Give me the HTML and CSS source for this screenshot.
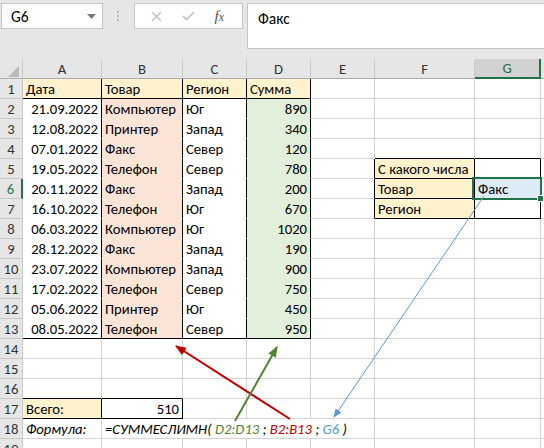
FILE: index.html
```html
<!DOCTYPE html>
<html>
<head>
  <title>СУММЕСЛИМН</title>
  <link rel="stylesheet" href="styles.css">
</head>
<body>
  <div class="app">
    <div class="toolbar">
      <div class="namebox">
        <span>G6</span>
        <svg width="9" height="5" viewBox="0 0 9 5"><path d="M0 0 H9 L4.5 5 Z" fill="#7a7a7a"/></svg>
      </div>
      <div class="grip">
        <svg width="3" height="11" viewBox="0 0 3 11">
          <rect x="0" y="0" width="2" height="2" fill="#b4b4b4"/>
          <rect x="0" y="4" width="2" height="2" fill="#b4b4b4"/>
          <rect x="0" y="8" width="2" height="2" fill="#b4b4b4"/>
        </svg>
      </div>
      <div class="fxbtns">
        <svg width="11" height="11" viewBox="0 0 11 11"><path d="M1 1 L10 10 M10 1 L1 10" stroke="#c3c3c3" stroke-width="1.4"/></svg>
        <svg width="13" height="10" viewBox="0 0 13 10"><path d="M1 5 L4.5 8.5 L12 1" fill="none" stroke="#c3c3c3" stroke-width="1.6"/></svg>
        <span class="fx">f<i>x</i></span>
      </div>
      <div class="formula">Факс</div>
    </div>

    <table class="sheet">
      <colgroup>
        <col style="width:23px"><col style="width:79px"><col style="width:81px"><col style="width:64px">
        <col style="width:64px"><col style="width:64px"><col style="width:100px"><col style="width:66px"><col style="width:30px">
      </colgroup>
      <tr class="head">
        <th class="corner"><svg width="11" height="11" viewBox="0 0 11 11"><path d="M11 0 V11 H0 Z" fill="#b9b9b9"/></svg></th>
        <th>A</th><th>B</th><th>C</th><th>D</th><th>E</th><th>F</th><th class="cur">G</th><th></th>
      </tr>
      <tr>
        <th>1</th>
        <td class="hd bk">Дата</td><td class="hd bk">Товар</td><td class="hd bk">Регион</td><td class="hd bk">Сумма</td>
        <td></td><td></td><td></td><td></td>
      </tr>
      <tr>
        <th>2</th>
        <td class="wt bk num">21.09.2022</td><td class="pk bk">Компьютер</td><td class="wt bk">Юг</td><td class="gr bk num">890</td>
        <td></td><td></td><td></td><td></td>
      </tr>
      <tr>
        <th>3</th>
        <td class="wt bk num">12.08.2022</td><td class="pk bk">Принтер</td><td class="wt bk">Запад</td><td class="gr bk num">340</td>
        <td></td><td></td><td></td><td></td>
      </tr>
      <tr>
        <th>4</th>
        <td class="wt bk num">07.01.2022</td><td class="pk bk">Факс</td><td class="wt bk">Север</td><td class="gr bk num">120</td>
        <td></td><td class="bb"></td><td class="bb"></td><td></td>
      </tr>
      <tr>
        <th>5</th>
        <td class="wt bk num">19.05.2022</td><td class="pk bk">Телефон</td><td class="wt bk">Север</td><td class="gr bk num">780</td>
        <td class="br"></td><td class="hd bx">С какого числа</td><td class="bx"></td><td></td>
      </tr>
      <tr>
        <th class="cur">6</th>
        <td class="wt bk num">20.11.2022</td><td class="pk bk">Факс</td><td class="wt bk">Запад</td><td class="gr bk num">200</td>
        <td class="br"></td><td class="hd bx">Товар</td><td class="bx sel">Факс</td><td></td>
      </tr>
      <tr>
        <th>7</th>
        <td class="wt bk num">16.10.2022</td><td class="pk bk">Телефон</td><td class="wt bk">Юг</td><td class="gr bk num">670</td>
        <td class="br"></td><td class="hd bx">Регион</td><td class="bx"></td><td></td>
      </tr>
      <tr>
        <th>8</th>
        <td class="wt bk num">06.03.2022</td><td class="pk bk">Компьютер</td><td class="wt bk">Юг</td><td class="gr bk num">1020</td>
        <td></td><td></td><td></td><td></td>
      </tr>
      <tr>
        <th>9</th>
        <td class="wt bk num">28.12.2022</td><td class="pk bk">Факс</td><td class="wt bk">Запад</td><td class="gr bk num">190</td>
        <td></td><td></td><td></td><td></td>
      </tr>
      <tr>
        <th>10</th>
        <td class="wt bk num">23.07.2022</td><td class="pk bk">Компьютер</td><td class="wt bk">Запад</td><td class="gr bk num">900</td>
        <td></td><td></td><td></td><td></td>
      </tr>
      <tr>
        <th>11</th>
        <td class="wt bk num">17.02.2022</td><td class="pk bk">Телефон</td><td class="wt bk">Север</td><td class="gr bk num">750</td>
        <td></td><td></td><td></td><td></td>
      </tr>
      <tr>
        <th>12</th>
        <td class="wt bk num">05.06.2022</td><td class="pk bk">Принтер</td><td class="wt bk">Юг</td><td class="gr bk num">450</td>
        <td></td><td></td><td></td><td></td>
      </tr>
      <tr>
        <th>13</th>
        <td class="wt bk last num">08.05.2022</td><td class="pk bk last">Телефон</td><td class="wt bk last">Север</td><td class="gr bk last num">950</td>
        <td></td><td></td><td></td><td></td>
      </tr>
      <tr>
        <th>14</th>
        <td></td><td></td><td></td><td></td><td></td><td></td><td></td><td></td>
      </tr>
      <tr>
        <th>15</th>
        <td></td><td></td><td></td><td></td><td></td><td></td><td></td><td></td>
      </tr>
      <tr>
        <th>16</th>
        <td class="bb"></td><td class="bb"></td><td></td><td></td><td></td><td></td><td></td><td></td>
      </tr>
      <tr>
        <th>17</th>
        <td class="hd bx">Всего:</td><td class="bx num">510</td><td></td><td></td><td></td><td></td><td></td><td></td>
      </tr>
      <tr>
        <th>18</th>
        <td class="it">Формула:</td>
        <td class="it" colspan="4">=СУММЕСЛИМН( <span class="rg">D2:D13</span> ; <span class="rr">B2:B13</span> ; <span class="rb">G6</span> )</td>
        <td></td><td></td><td></td>
      </tr>
      <tr>
        <th>19</th>
        <td></td><td></td><td></td><td></td><td></td><td></td><td></td><td></td>
      </tr>
    </table>

    <svg class="arrows" width="544" height="448" viewBox="0 0 544 448">
      <defs>
        <marker id="headRed" viewBox="0 0 10 8" refX="9" refY="4" markerWidth="11" markerHeight="9" markerUnits="userSpaceOnUse" orient="auto">
          <path d="M0 0 L10 4 L0 8 Z" fill="#c00000"/>
        </marker>
        <marker id="headGreen" viewBox="0 0 10 8" refX="9" refY="4" markerWidth="11" markerHeight="9" markerUnits="userSpaceOnUse" orient="auto">
          <path d="M0 0 L10 4 L0 8 Z" fill="#548235"/>
        </marker>
        <marker id="headBlue" viewBox="0 0 10 8" refX="9" refY="4" markerWidth="9" markerHeight="7" markerUnits="userSpaceOnUse" orient="auto">
          <path d="M0 0 L10 4 L0 8 Z" fill="#5b9bd5"/>
        </marker>
      </defs>
      <line x1="290" y1="419" x2="176" y2="346" stroke="#c00000" stroke-width="2" marker-end="url(#headRed)"/>
      <line x1="235" y1="421" x2="277" y2="347" stroke="#548235" stroke-width="2" marker-end="url(#headGreen)"/>
      <line x1="484" y1="196" x2="334" y2="417" stroke="#5b9bd5" stroke-width="1" marker-end="url(#headBlue)"/>
    </svg>
  </div>
</body>
</html>
```

FILE: styles.css
```css
body {
  margin: 0;
  font-family: Calibri, Carlito, "Liberation Sans", Arial, sans-serif;
  font-size: 14.67px;
  color: #000;
  background: #fff;
}
.app {
  position: relative;
  width: 544px;
  height: 448px;
  overflow: hidden;
}

/* formula bar */
.toolbar {
  height: 59px;
  box-sizing: border-box;
  padding-top: 3px;
  background: #e6e6e6;
  display: flex;
  align-items: flex-start;
}
.namebox {
  margin-left: 1px;
  width: 102px;
  height: 26px;
  box-sizing: border-box;
  background: #fff;
  border: 1px solid #c6c6c6;
  display: flex;
  align-items: center;
  justify-content: space-between;
  padding: 0 6px 0 9px;
  font-size: 15.5px;
}
.grip {
  width: 31px;
  height: 26px;
  display: flex;
  align-items: center;
  justify-content: center;
}
.fxbtns {
  width: 109px;
  height: 26px;
  box-sizing: border-box;
  background: #fff;
  border: 1px solid #c6c6c6;
  display: flex;
  align-items: center;
  justify-content: space-around;
  padding: 0 8px 0 6px;
}
.fx {
  font-family: "Liberation Serif", serif;
  font-style: italic;
  font-size: 15px;
  color: #505050;
}
.fx i {
  font-size: 12px;
}
.formula {
  flex: 1;
  height: 46px;
  margin-left: 4px;
  box-sizing: border-box;
  background: #fff;
  border: 1px solid #c6c6c6;
  border-right: none;
  padding: 5px 10px;
  font-size: 15.5px;
}

/* sheet */
.sheet {
  table-layout: fixed;
  border-collapse: separate;
  border-spacing: 0;
  width: 571px;
}
.sheet td, .sheet th {
  box-sizing: border-box;
  height: 20px;
  padding: 0 3px;
  border-right: 1px solid #d4d4d4;
  border-bottom: 1px solid #d4d4d4;
  white-space: nowrap;
  overflow: hidden;
  font-weight: normal;
  line-height: 18px;
}
.sheet th {
  background: #e6e6e6;
  border-right-color: #c8c8c8;
  border-bottom-color: #c8c8c8;
  color: #333;
  text-align: center;
  padding: 0;
}
.head th {
  border-bottom-color: #ababab;
}
.sheet th.corner {
  text-align: right;
  vertical-align: bottom;
  padding: 0 3px 1px 0;
  line-height: 0;
}
.head th.cur {
  background: #d2d2d2;
  color: #217346;
  border-bottom: 2px solid #217346;
}
.sheet th.cur {
  color: #217346;
  border-right: 2px solid #217346;
}

.num { text-align: right; }
.it { font-style: italic; overflow: visible !important; }
.rg { color: #548235; }
.rr { color: #c00000; }
.rb { color: #5b9bd5; }

/* fills */
.hd { background: #fff2cc; }
.wt { background: #fff; }
.pk { background: #fce4d6; }
.gr { background: #e2efda; }

/* borders of the data blocks */
.sheet td.bk {
  border-right-color: #000;
  border-bottom-color: transparent;
}
.sheet td.hd.bk,
.sheet td.bk.last {
  border-bottom-color: #000;
}
.sheet td.bx {
  border-right-color: #000;
  border-bottom-color: #000;
}
.sheet td.br { border-right-color: #000; }
.sheet td.bb { border-bottom-color: #000; }

.sheet td.sel {
  position: relative;
  background: #ddebf7;
  overflow: visible;
}
.sel::after {
  content: "";
  position: absolute;
  left: -3px;
  top: -2px;
  right: -2px;
  bottom: -2px;
  border: 2px solid #217346;
}
.sel::before {
  content: "";
  position: absolute;
  right: -4px;
  bottom: -4px;
  width: 5px;
  height: 5px;
  background: #217346;
  border: 1px solid #fff;
  z-index: 1;
}

.arrows {
  position: absolute;
  left: 0;
  top: 0;
  pointer-events: none;
}
```
